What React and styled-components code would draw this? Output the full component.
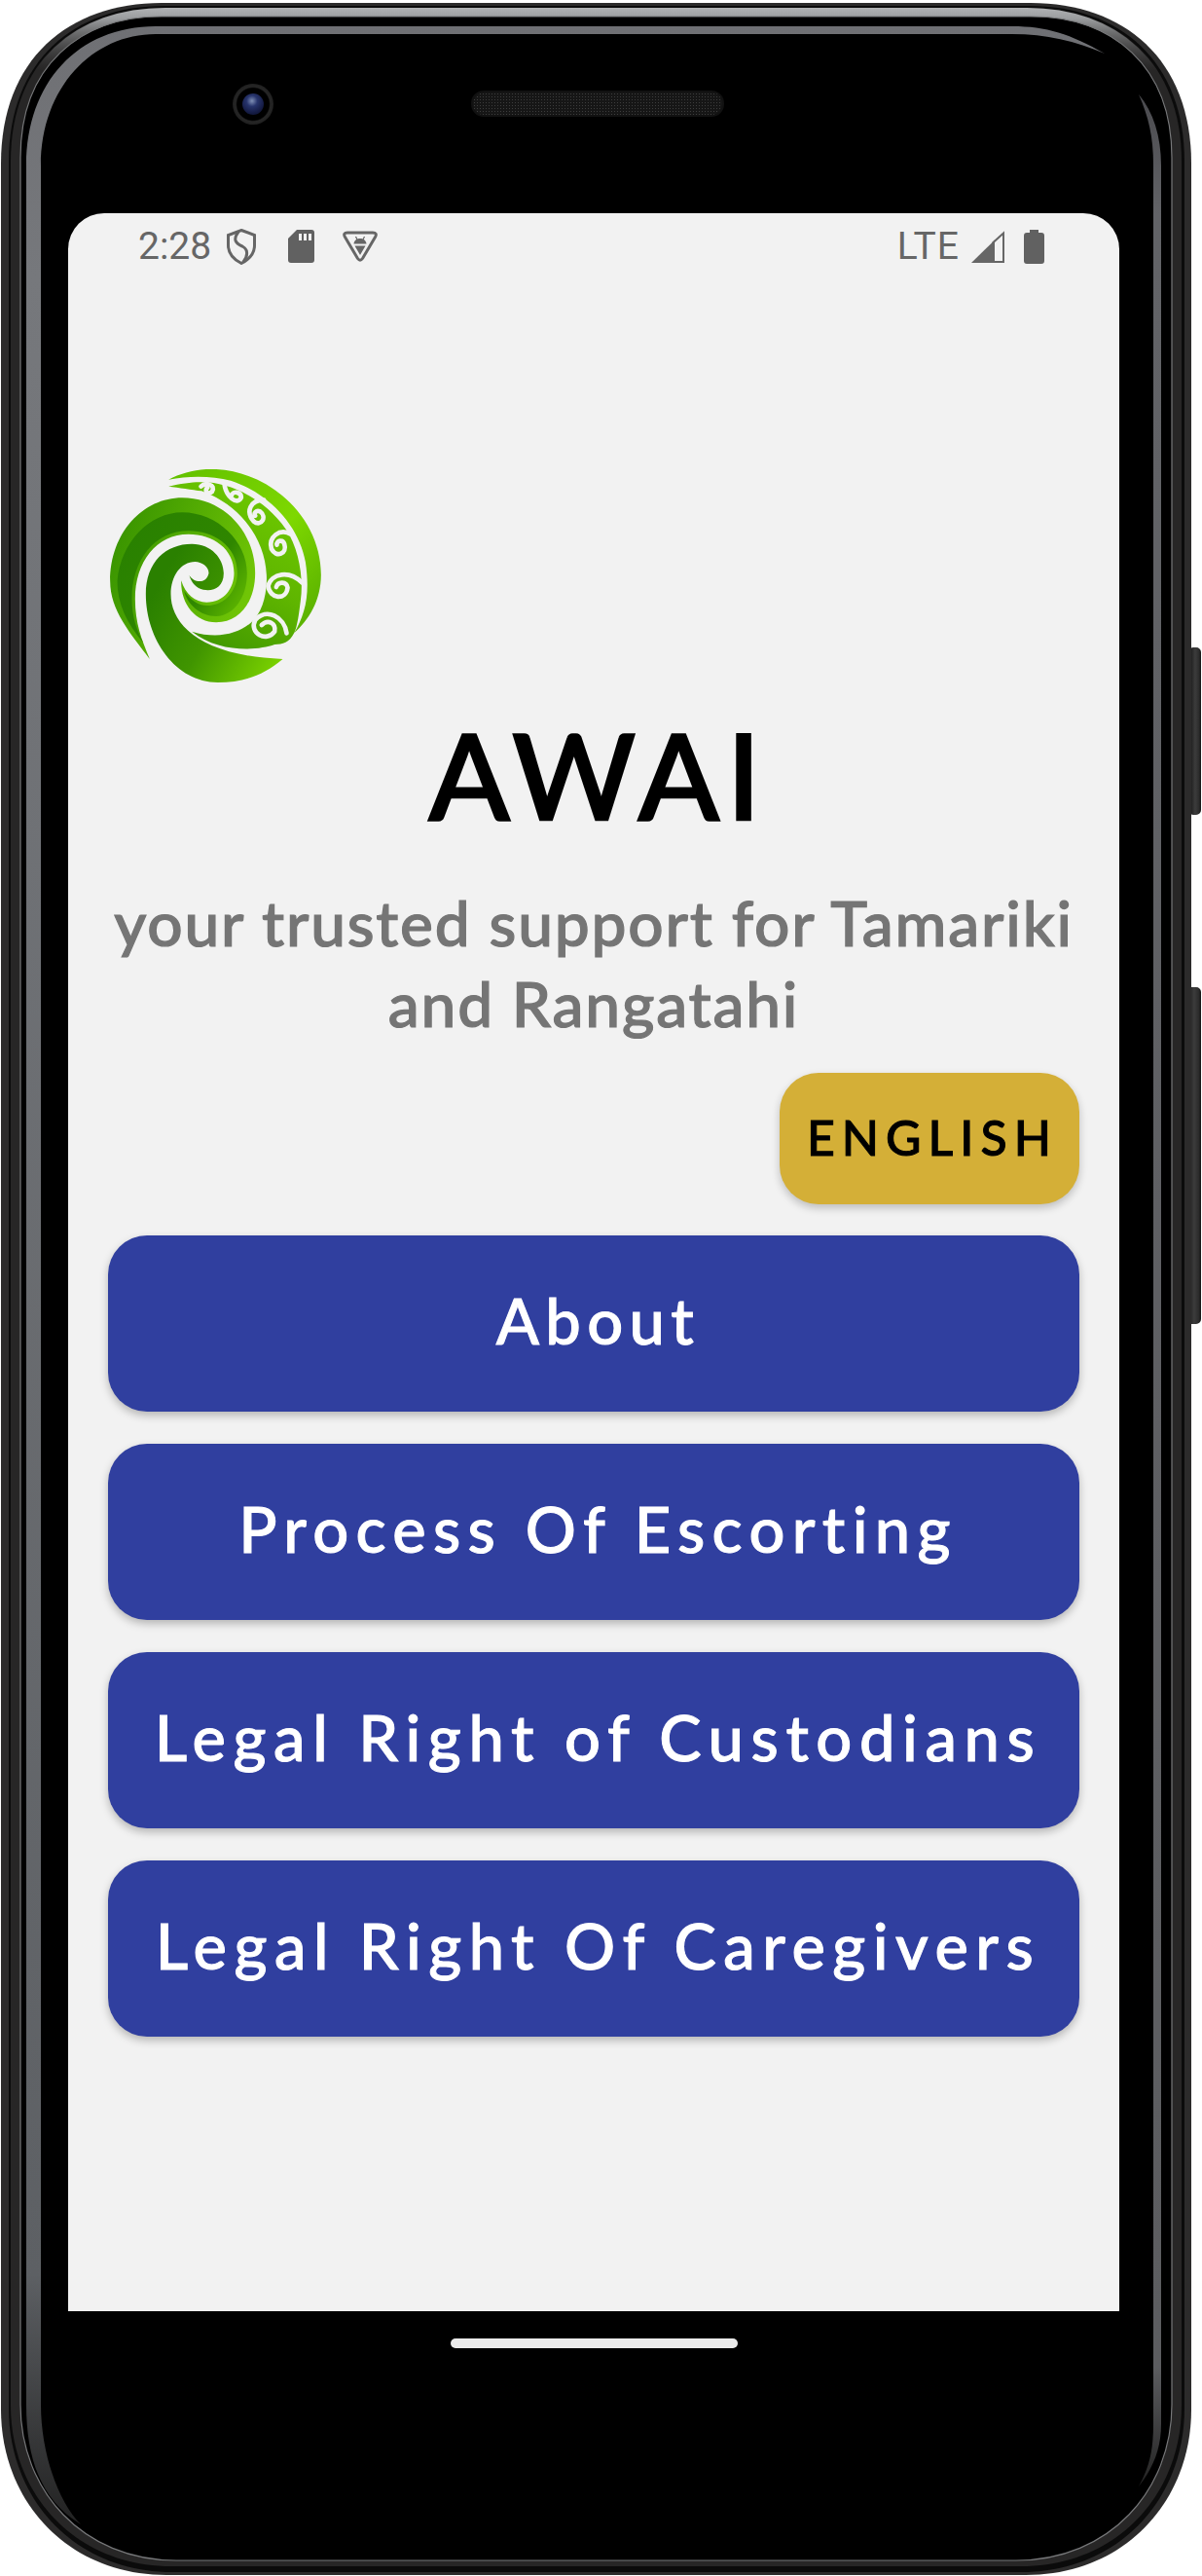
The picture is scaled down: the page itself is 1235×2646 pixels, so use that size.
import React from 'react';
import styled, { createGlobalStyle } from 'styled-components';

const GlobalStyle = createGlobalStyle`
  html, body {
    margin: 0;
    padding: 0;
    background: #fff;
  }
`;

const MENU = [
  { label: 'About', spacing: 6.4 },
  { label: 'Process Of Escorting', spacing: 7.3 },
  { label: 'Legal Right of Custodians', spacing: 7.6 },
  { label: 'Legal Right Of Caregivers', spacing: 7.5 },
];

const UI_FONT = `Lato, "Noto Sans", sans-serif`;

// rounded phone outline, every band of the bezel is the same shape with other insets
const shell = (l, t, r, b, tr, br) =>
  `M${l} ${t + tr} C${l} ${t + tr * 0.35} ${l + tr * 0.42} ${t} ${l + tr} ${t} H${r - tr} ` +
  `C${r - tr * 0.42} ${t} ${r} ${t + tr * 0.35} ${r} ${t + tr} V${b - br} ` +
  `C${r} ${b - br * 0.45} ${r - br * 0.4} ${b} ${r - br} ${b} H${l + br} ` +
  `C${l + br * 0.4} ${b} ${l} ${b - br * 0.45} ${l} ${b - br} Z`;

const Device = styled.div`
  position: relative;
  width: 1235px;
  height: 2646px;
  box-sizing: border-box;
  padding: 0 85px 0 70px;
  display: flex;
  flex-direction: column;
  overflow: hidden;
`;

const FrameArt = styled.svg`
  position: absolute;
  inset: 0;
`;

const SideKey = styled.div`
  position: absolute;
  right: 1px;
  top: ${(p) => p.$top}px;
  width: ${(p) => p.$width}px;
  height: ${(p) => p.$height}px;
  border-radius: 3px 5px 5px 3px;
  background: linear-gradient(90deg, #1c1c1c 0%, #3c3c3c 45%, #2c2c2c 80%, #151515 100%);
`;

const TopBezel = styled.div`
  position: relative;
  height: 219px;
  box-sizing: border-box;
  padding: 86px 0 0 169px;
  display: flex;
  align-items: flex-start;
  gap: 203px;
`;

const Camera = styled.div`
  width: 42px;
  height: 42px;
  border-radius: 50%;
  background: radial-gradient(circle, #000 55%, #262626 60%, #151515 90%, #060606 100%);
  display: flex;
  align-items: center;
  justify-content: center;
`;

const Lens = styled.div`
  width: 22px;
  height: 22px;
  border-radius: 50%;
  background: radial-gradient(circle at 45% 35%, #7f8fb5 0%, #27346c 30%, #151c45 65%, #080b1e 100%);
`;

const Speaker = styled.div`
  margin-top: 7px;
  width: 260px;
  height: 27px;
  box-sizing: border-box;
  border-radius: 13px;
  border: 2px solid #111;
  background-color: #161616;
  background-image: radial-gradient(circle, #3d3d3d 0.8px, transparent 1px);
  background-size: 3px 3px;
`;

const Screen = styled.main`
  position: relative;
  height: 2155px;
  box-sizing: border-box;
  background: #f2f2f2;
  border-radius: 37px 37px 0 0;
  padding: 15px 41px 0 41px;
  display: flex;
  flex-direction: column;
`;

const StatusBar = styled.div`
  display: flex;
  align-items: center;
  justify-content: space-between;
  height: 38px;
  padding: 0 36px 0 31px;
  color: #666;
  font-family: Roboto, sans-serif;
  font-size: 39px;
  line-height: 38px;
`;

const StatusGroup = styled.div`
  display: flex;
  align-items: center;
`;

const Carrier = styled.span`
  letter-spacing: 1px;
`;

const StatusIcon = styled.svg`
  display: block;
  margin-left: ${(p) => p.$gap}px;
`;

const Logo = styled.svg`
  display: block;
  margin: 210px 0 0 2px;
`;

const Title = styled.h1`
  margin: 29px 0 0;
  padding-left: 10px;
  text-align: center;
  font-family: ${UI_FONT};
  font-weight: 500;
  font-size: 122px;
  line-height: 130px;
  letter-spacing: 8px;
  -webkit-text-stroke: 2.5px #000;
  color: #000;
`;

const Subtitle = styled.p`
  margin: 46px -15px 0;
  text-align: center;
  font-family: ${UI_FONT};
  font-weight: 500;
  font-size: 64px;
  line-height: 83px;
  letter-spacing: 1.8px;
  -webkit-text-stroke: 1.2px #757575;
  color: #757575;
`;

const LangRow = styled.div`
  display: flex;
  justify-content: flex-end;
  margin-top: 30px;
`;

const LangButton = styled.button`
  width: 308px;
  height: 135px;
  border: 0;
  padding: 0 0 4px 6px;
  border-radius: 40px;
  background: #d4af37;
  color: #000;
  font-family: ${UI_FONT};
  font-weight: 500;
  font-size: 50px;
  letter-spacing: 7px;
  -webkit-text-stroke: 1px #000;
  box-shadow: 0 4px 8px rgba(0, 0, 0, 0.22);
`;

const Menu = styled.nav`
  margin-top: 32px;
  display: flex;
  flex-direction: column;
  gap: 33px;
`;

const MenuButton = styled.button`
  height: 181px;
  border: 0;
  padding: 0 0 7px 9px;
  border-radius: 40px;
  background: #303f9f;
  color: #fff;
  font-family: ${UI_FONT};
  font-weight: 500;
  font-size: 65px;
  letter-spacing: ${(p) => p.$spacing}px;
  -webkit-text-stroke: 1px #fff;
  white-space: nowrap;
  box-shadow: 0 4px 8px rgba(0, 0, 0, 0.25);
`;

const BottomBezel = styled.div`
  position: relative;
  padding-top: 28px;
  display: flex;
  justify-content: center;
`;

const HomeBar = styled.div`
  width: 295px;
  height: 10px;
  border-radius: 5px;
  background: #ebebeb;
`;

function PhoneFrame() {
  return (
    <FrameArt width="1235" height="2646" viewBox="0 0 1235 2646">
      <defs>
        <linearGradient id="topShine" gradientUnits="userSpaceOnUse" x1="0" y1="6" x2="0" y2="72">
          <stop offset="0" stopColor="#b4b6b8" />
          <stop offset="0.2" stopColor="#9a9c9e" />
          <stop offset="1" stopColor="#555" stopOpacity="0" />
        </linearGradient>
        <linearGradient id="glassLeft" gradientUnits="userSpaceOnUse" x1="0" y1="27" x2="0" y2="2593">
          <stop offset="0" stopColor="#6f7074" />
          <stop offset="0.1" stopColor="#76787c" />
          <stop offset="0.9" stopColor="#5d6064" />
          <stop offset="1" stopColor="#222" />
        </linearGradient>
        <linearGradient id="glassRight" gradientUnits="userSpaceOnUse" x1="0" y1="97" x2="0" y2="2554">
          <stop offset="0" stopColor="#4a4a4e" />
          <stop offset="0.05" stopColor="#626367" />
          <stop offset="0.95" stopColor="#5c5d60" />
          <stop offset="1" stopColor="#222" />
        </linearGradient>
      </defs>
      <path d={shell(1, 3, 1224, 2645, 165, 170)} fill="#2c2b2b" />
      <path d={shell(9, 6, 1217, 2642, 160, 168)} fill="#0b0b0b" />
      <path d={shell(11, 8, 1214, 2636, 158, 165)} fill="#272626" />
      <path d={shell(15, 12.5, 1210, 2636, 155, 165)} fill="none" stroke="url(#topShine)" strokeWidth="9" />
      <path d={shell(21, 17, 1204, 2630, 145, 160)} fill="#000" stroke="#77787a" strokeWidth="1.2" />
      <path d={shell(22.5, 18, 1202.5, 2626, 144, 158)} fill="#000" />
      <path
        d="M1135 55 C1100 35 1075 27 1040 27 L160 27 C80 27 27 85 27 170 L27 2470 C27 2530 45 2570 83 2593 C60 2570 42 2520 42 2470 L42 170 C42 90 95 35 160 35 L1040 35 C1075 35 1105 42 1135 55 Z"
        fill="url(#glassLeft)"
      />
      <path
        d="M1170 97 C1180 120 1185 140 1185 170 L1185 2490 C1185 2520 1180 2535 1170 2554 C1185 2535 1193 2515 1193 2490 L1193 170 C1193 140 1185 115 1170 97 Z"
        fill="url(#glassRight)"
      />
    </FrameArt>
  );
}

function KoruLogo() {
  const gap = '#f2f2f2';
  return (
    <Logo width="217" height="219" viewBox="68 65 650 657">
      <defs>
        <linearGradient id="armDark" gradientUnits="userSpaceOnUse" x1="90" y1="250" x2="500" y2="520">
          <stop offset="0" stopColor="#288000" />
          <stop offset="0.65" stopColor="#2f8600" />
          <stop offset="1" stopColor="#6cc400" />
        </linearGradient>
        <linearGradient id="armRim" gradientUnits="userSpaceOnUse" x1="100" y1="250" x2="510" y2="400">
          <stop offset="0" stopColor="#3a9500" />
          <stop offset="1" stopColor="#70c506" />
        </linearGradient>
        <linearGradient id="armLow" gradientUnits="userSpaceOnUse" x1="200" y1="450" x2="600" y2="680">
          <stop offset="0" stopColor="#2a8000" />
          <stop offset="0.45" stopColor="#409500" />
          <stop offset="1" stopColor="#7fd600" />
        </linearGradient>
        <linearGradient id="crescent" gradientUnits="userSpaceOnUse" x1="300" y1="600" x2="600" y2="120">
          <stop offset="0" stopColor="#3e9500" />
          <stop offset="0.5" stopColor="#5fb500" />
          <stop offset="1" stopColor="#6fcb00" />
        </linearGradient>
        <linearGradient id="outerBand" gradientUnits="userSpaceOnUse" x1="250" y1="80" x2="700" y2="500">
          <stop offset="0" stopColor="#62c000" />
          <stop offset="0.6" stopColor="#7ed800" />
          <stop offset="1" stopColor="#5cb300" />
        </linearGradient>
      </defs>
      <path
        d="M190 650 C130 570 68 500 68 410 C68 260 170 153 290 153 C420 153 515 260 515 385 C515 470 470 537 395 537 C330 537 285 480 287 408 C300 450 330 475 365 475 C420 475 450 430 450 385 C450 310 385 265 310 265 C210 265 145 350 145 465 C145 540 165 590 190 650 Z"
        fill="url(#armRim)"
      />
      <path
        d="M170 600 C120 540 90 480 90 410 C100 290 190 198 290 198 C400 198 490 290 490 385 C490 460 450 515 395 518 C345 518 305 480 296 440 C320 475 345 485 365 485 C425 485 460 435 460 385 C460 300 385 255 310 255 C205 255 135 345 135 465 C135 520 150 560 170 600 Z"
        fill="url(#armDark)"
      />
      <path
        d="M600 650 C540 700 480 722 400 722 C270 722 178 590 178 450 C178 350 240 295 320 295 C380 295 418 340 418 385 C418 430 385 442 355 436 C335 432 318 415 312 392 C325 415 365 420 372 385 C372 365 350 350 330 350 C285 350 255 395 255 450 C255 540 340 640 600 650 Z"
        fill="url(#armLow)"
      />
      <path
        d="M320 565 C400 590 470 572 510 530 C548 490 552 420 550 390 C545 280 470 175 350 132 C320 128 280 122 248 118 C290 108 330 103 355 105 C430 105 540 150 610 250 C650 310 665 400 655 470 C650 510 645 550 635 570 C620 600 600 605 575 605 C520 625 400 630 320 565 Z"
        fill="url(#crescent)"
      />
      <path
        d="M248 97 C290 75 340 62 395 65 C570 75 718 220 718 390 C718 470 680 530 635 570 C670 510 685 450 670 350 C650 240 560 140 440 100 C380 85 310 85 248 97 Z"
        fill="url(#outerBand)"
      />
      <g fill="none" stroke={gap} strokeWidth="14" strokeLinecap="round" strokeLinejoin="round">
        <path d="M348 118 C362 104 395 112 382 134 C370 146 356 130 368 122" />
        <path d="M420 110 C425 150 460 178 472 152 C472 135 446 130 442 146" />
        <path d="M542 160 C500 160 485 195 510 225 C535 245 552 210 530 195 C518 190 510 200 515 208" />
        <path d="M625 265 C590 245 555 275 565 310 C580 340 615 325 605 295 C600 280 580 285 582 298" />
        <path d="M660 415 C620 375 565 385 555 425 C560 465 610 470 615 430 C612 410 585 410 580 428" />
        <path d="M612 570 C605 520 550 490 515 530 C495 570 550 600 575 565 C580 540 555 525 535 545" />
      </g>
    </Logo>
  );
}

export default function App() {
  return (
    <Device>
      <GlobalStyle />
      <SideKey $top={665} $width={11} $height={172} />
      <SideKey $top={1014} $width={13} $height={346} />
      <PhoneFrame />
      <TopBezel>
        <Camera>
          <Lens />
        </Camera>
        <Speaker />
      </TopBezel>
      <Screen>
        <StatusBar>
          <StatusGroup>
            <span>2:28</span>
            <StatusIcon $gap={16} width="30" height="37" viewBox="0 0 30 37">
              <path d="M15 1.5 L28.5 6.5 V17 C28.5 25 23 31.5 15 35.5 C7 31.5 1.5 25 1.5 17 V6.5 Z" fill="none" stroke="#666" strokeWidth="3" />
              <path d="M12 3 C6 11 9 15 16 18 C22 21 22 28 17 34" fill="none" stroke="#666" strokeWidth="3" />
            </StatusIcon>
            <StatusIcon $gap={33} width="27" height="34" viewBox="0 0 27 34">
              <path d="M9 0 H24 a3 3 0 0 1 3 3 V31 a3 3 0 0 1 -3 3 H3 a3 3 0 0 1 -3 -3 V9 Z" fill="#616161" />
              <path d="M11 4 h3 v7 h-3 Z M16 4 h3 v7 h-3 Z M21 4 h3 v7 h-3 Z" fill="#f2f2f2" />
            </StatusIcon>
            <StatusIcon $gap={29} width="36" height="33" viewBox="0 0 36 33">
              <path d="M5 2 H31 Q36 2 33.5 6.5 L20.5 28.5 Q18 32 15.5 28.5 L2.5 6.5 Q0 2 5 2 Z" fill="none" stroke="#666" strokeWidth="3" />
              <path d="M11.5 13.5 C12 9.5 15 8 18 8 C21 8 24 9.5 24.5 13.5 Z M12.5 15.5 H23.5 L18 25 Z" fill="#666" />
              <path d="M13.5 6 L15 9 M22.5 6 L21 9" stroke="#666" strokeWidth="1.2" />
            </StatusIcon>
          </StatusGroup>
          <StatusGroup>
            <Carrier>LTE</Carrier>
            <StatusIcon $gap={12} width="34" height="33" viewBox="0 0 34 33">
              <path d="M0 33 L24 9.5 V33 Z" fill="#666" />
              <path d="M33 2.5 V32 H22 V12.5 Z" fill="none" stroke="#666" strokeWidth="2" />
            </StatusIcon>
            <StatusIcon $gap={20} width="21" height="35" viewBox="0 0 21 35">
              <path d="M6 0 H15 V3 H18 a3 3 0 0 1 3 3 V32 a3 3 0 0 1 -3 3 H3 a3 3 0 0 1 -3 -3 V6 a3 3 0 0 1 3 -3 H6 Z" fill="#616161" />
            </StatusIcon>
          </StatusGroup>
        </StatusBar>
        <KoruLogo />
        <Title>AWAI</Title>
        <Subtitle>
          your trusted support for Tamariki
          <br />
          and Rangatahi
        </Subtitle>
        <LangRow>
          <LangButton>ENGLISH</LangButton>
        </LangRow>
        <Menu>
          {MENU.map((item) => (
            <MenuButton key={item.label} $spacing={item.spacing}>
              {item.label}
            </MenuButton>
          ))}
        </Menu>
      </Screen>
      <BottomBezel>
        <HomeBar />
      </BottomBezel>
    </Device>
  );
}
